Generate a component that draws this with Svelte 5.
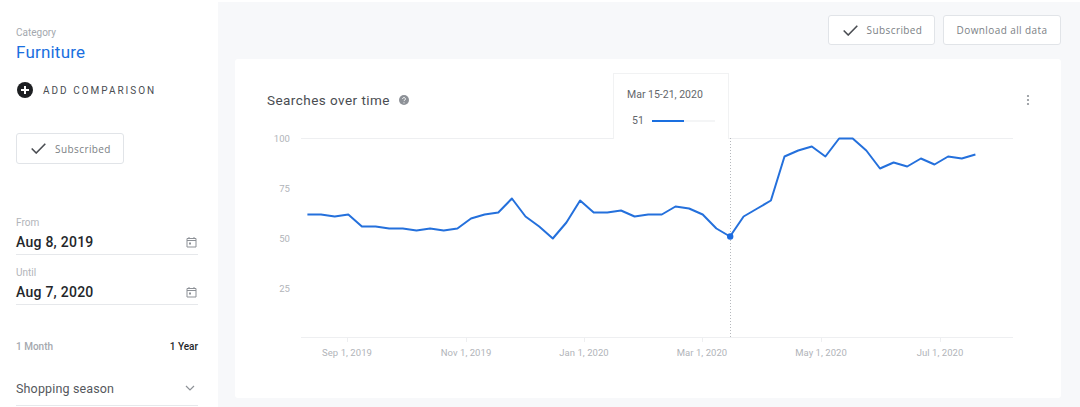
<script>
  const values = [62,62,61,62,56,56,55,55,54,55,54,55,60,62,63,70,61,56,50,58,69,63,63,64,61,62,62,66,65,62,55,51,61,65,69,91,94,96,91,100,100,94,85,88,86,90,87,91,90,92];
  // Chart coordinates: origin at the top-left of the svg, which sits 235,125 on the page
  const px = (i) => 72.4 + i * (668 / 49);
  const py = (v) => 13.5 + (100 - v) * 2;
  const line = values.map((v, i) => `${px(i).toFixed(1)},${py(v)}`).join(' ');
  const yTicks = [100, 75, 50, 25];
  const xTicks = [
    { x: 112, label: 'Sep 1, 2019' },
    { x: 231, label: 'Nov 1, 2019' },
    { x: 349, label: 'Jan 1, 2020' },
    { x: 467, label: 'Mar 1, 2020' },
    { x: 586, label: 'May 1, 2020' },
    { x: 705, label: 'Jul 1, 2020' }
  ];
</script>

{#snippet check()}
  <svg class="check" width="15" height="11" viewBox="0 0 15 11" aria-hidden="true">
    <path d="M0.7 5.5 L5.2 10 L14.3 0.8" fill="none" stroke="#4a4d52" stroke-width="1.6" />
  </svg>
{/snippet}

{#snippet calendar()}
  <svg class="cal" width="11" height="12" viewBox="0 0 11 12" aria-hidden="true">
    <path d="M1 2.5h9v8.5h-9z M1 4.5h9" fill="none" stroke="#8d9197" stroke-width="1" />
    <path d="M3 1v2M8 1v2" stroke="#8d9197" stroke-width="1" />
    <rect x="3" y="6.5" width="2" height="2" fill="#8d9197" />
  </svg>
{/snippet}

<div class="page">
  <aside class="side">
    <div class="cat-label">Category</div>
    <div class="cat-name">Furniture</div>

    <div class="add">
      <svg width="16" height="16" viewBox="0 0 16 16" aria-hidden="true">
        <circle cx="8" cy="8" r="8" fill="#1d1f22" />
        <path d="M8 4v8M4 8h8" stroke="#fff" stroke-width="2" />
      </svg>
      <span>ADD COMPARISON</span>
    </div>

    <button class="btn side-btn">{@render check()}Subscribed</button>

    <div class="field from">
      <div class="field-label">From</div>
      <div class="field-row"><span>Aug 8, 2019</span>{@render calendar()}</div>
    </div>
    <div class="field until">
      <div class="field-label">Until</div>
      <div class="field-row"><span>Aug 7, 2020</span>{@render calendar()}</div>
    </div>

    <div class="range">
      <span class="muted">1 Month</span>
      <span class="strong">1 Year</span>
    </div>

    <div class="select">
      <span>Shopping season</span>
      <svg width="10" height="6" viewBox="0 0 10 6" aria-hidden="true">
        <path d="M1 1l4 4 4-4" fill="none" stroke="#8d9197" stroke-width="1.2" />
      </svg>
    </div>
  </aside>

  <main class="main">
    <div class="actions">
      <button class="btn top-sub">{@render check()}Subscribed</button>
      <button class="btn top-dl">Download all data</button>
    </div>

    <section class="card">
      <header class="card-head">
        <h2>Searches over time</h2>
        <svg class="help" width="10" height="10" viewBox="0 0 10 10" aria-hidden="true">
          <circle cx="5" cy="5" r="5" fill="#8d9197" />
          <path d="M3.6 4a1.4 1.4 0 1 1 2.2 1.1c-.5.3-.8.5-.8 1" fill="none" stroke="#fff" stroke-width="1" />
          <circle cx="5" cy="7.8" r=".6" fill="#fff" />
        </svg>
        <svg class="more" width="4" height="12" viewBox="0 0 4 12" aria-hidden="true">
          <circle cx="2" cy="2" r="1.1" fill="#8d9197" />
          <circle cx="2" cy="6" r="1.1" fill="#8d9197" />
          <circle cx="2" cy="10" r="1.1" fill="#8d9197" />
        </svg>
      </header>

      <svg class="chart" width="826" height="240" viewBox="0 0 826 240" role="img" aria-label="Searches over time">
        <line x1="66" x2="778" y1="13.5" y2="13.5" class="grid" />
        <line x1="66" x2="778" y1="212.5" y2="212.5" class="grid" />
        {#each yTicks as t}
          <text x="55" y={py(t) + 3.5} text-anchor="end" class="tick">{t}</text>
        {/each}
        {#each xTicks as t}
          <line x1={t.x + 0.5} x2={t.x + 0.5} y1="212" y2="217" class="grid" />
          <text x={t.x} y="231" text-anchor="middle" class="tick">{t.label}</text>
        {/each}
        <line x1="495.5" x2="495.5" y1="13" y2="212" class="cursor" />
        <polyline points={line} fill="none" stroke="#2470dc" stroke-width="2" stroke-linejoin="round" />
        <circle cx="495.2" cy={py(51)} r="3.2" fill="#1a6ae0" />
      </svg>

      <div class="tooltip">
        <div class="tip-date">Mar 15-21, 2020</div>
        <div class="tip-row">
          <span>51</span>
          <div class="tip-track"><div class="tip-bar" style="width: {values[31]}%"></div></div>
        </div>
      </div>
    </section>
  </main>
</div>

<style>
  :global(body) {
    margin: 0;
    background: #fff;
  }
  .page {
    display: flex;
    width: 1080px;
    height: 407px;
    overflow: hidden;
    font-family: Roboto, "Liberation Sans", sans-serif;
    color: #23262a;
  }
  .side {
    box-sizing: border-box;
    width: 218px;
    flex: none;
    padding: 27px 20px 0 16px;
    background: #fff;
  }
  .cat-label {
    font-size: 10px;
    line-height: 12px;
    color: #a4a8ae;
  }
  .cat-name {
    margin-top: 3px;
    font-size: 17px;
    line-height: 20px;
    letter-spacing: 0.2px;
    color: #1a6fe0;
  }
  .add {
    display: flex;
    align-items: center;
    gap: 10px;
    margin: 20px 0 0 1px;
    height: 16px;
    font-size: 10px;
    letter-spacing: 2px;
    color: #4a4d52;
  }
  .btn {
    display: flex;
    align-items: center;
    justify-content: center;
    box-sizing: border-box;
    height: 30px;
    padding: 0;
    border: 1px solid #e1e4e8;
    border-radius: 3px;
    background: #fff;
    font-family: "Open Sans", Roboto, sans-serif;
    font-size: 10px;
    letter-spacing: 0.4px;
    color: #7b7f85;
  }
  .check {
    margin-right: 9px;
  }
  .side-btn,
  .top-sub {
    padding-left: 2px;
  }
  .side-btn {
    width: 108px;
    height: 31px;
    margin-top: 35px;
  }
  .field-label {
    font-size: 10px;
    line-height: 12px;
    color: #b1b4b9;
  }
  .field-row {
    display: flex;
    align-items: center;
    justify-content: space-between;
    height: 22px;
    margin-top: 2px;
    padding-bottom: 1px;
    border-bottom: 1px solid #e6e8eb;
    font-size: 14px;
    font-weight: 500;
    letter-spacing: 0.25px;
    color: #23262a;
  }
  .cal {
    margin-right: 1px;
  }
  .from {
    margin-top: 53px;
  }
  .until {
    margin-top: 12px;
  }
  .range {
    display: flex;
    justify-content: space-between;
    margin-top: 36px;
    font-size: 10px;
    line-height: 12px;
    font-weight: 500;
  }
  .muted {
    color: #a4a8ae;
  }
  .strong {
    color: #23262a;
  }
  .select {
    display: flex;
    align-items: center;
    justify-content: space-between;
    box-sizing: border-box;
    height: 29px;
    margin-top: 24px;
    padding: 0 3px 6px 0;
    border-bottom: 1px solid #e6e8eb;
    font-size: 12.5px;
    letter-spacing: 0.15px;
    color: #55585d;
  }
  .main {
    flex: 1;
    margin-top: 2px;
    padding: 13px 19px 0 17px;
    background: #f7f8fa;
  }
  .actions {
    display: flex;
    justify-content: flex-end;
    gap: 8px;
  }
  .top-sub {
    width: 107px;
  }
  .top-dl {
    width: 118px;
  }
  .card {
    position: relative;
    height: 339px;
    margin-top: 14px;
    border-radius: 3px;
    background: #fff;
  }
  .card-head {
    display: flex;
    align-items: center;
    height: 82px;
    padding: 0 31px 0 32px;
    box-sizing: border-box;
  }
  .card-head h2 {
    margin: 0;
    font-size: 13.5px;
    font-weight: 400;
    letter-spacing: 0.45px;
    color: #4a4d52;
  }
  .help {
    margin-left: 9px;
  }
  .more {
    margin-left: auto;
  }
  .chart {
    position: absolute;
    top: 66px;
    left: 0;
    display: block;
  }
  .grid {
    stroke: #eeeff1;
    stroke-width: 1;
  }
  .cursor {
    stroke: #b5b8bc;
    stroke-width: 1;
    stroke-dasharray: 1 2;
  }
  .tick {
    font-family: Roboto, sans-serif;
    font-size: 9.5px;
    letter-spacing: 0.05px;
    fill: #b1b4b9;
  }
  .tooltip {
    position: absolute;
    top: 14px;
    left: 378px;
    box-sizing: border-box;
    width: 116px;
    height: 66px;
    padding: 15px 13px 0 13px;
    border: 1px solid #f1f2f3;
    border-bottom: none;
    background: #fff;
  }
  .tip-date {
    font-size: 10.5px;
    line-height: 12px;
    color: #63666b;
  }
  .tip-row {
    display: flex;
    align-items: center;
    gap: 8px;
    margin: 14px 0 0 5px;
    font-size: 10.5px;
    line-height: 12px;
    color: #63666b;
  }
  .tip-track {
    flex: 1;
    height: 2px;
    background: #f4f5f6;
  }
  .tip-bar {
    height: 100%;
    background: #1a6fe0;
  }
</style>
